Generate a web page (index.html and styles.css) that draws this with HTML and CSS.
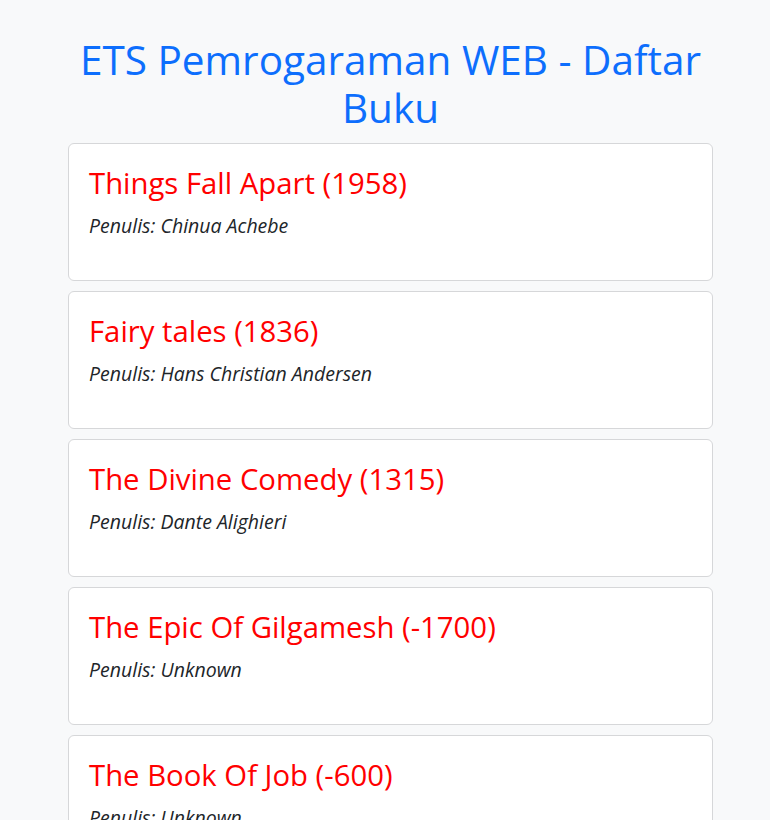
FILE: index.html
```html
<!DOCTYPE html>
<html lang="id">
<head>
<meta charset="utf-8">
<title>ETS Pemrogaraman WEB - Daftar Buku</title>
<link rel="stylesheet" href="styles.css">
</head>
<body>
<main class="container">
  <h1 class="page-title">ETS Pemrogaraman WEB - Daftar Buku</h1>
  <div class="book-list">
    <div class="book-card">
      <h2 class="book-title">Things Fall Apart (1958)</h2>
      <p class="book-author">Penulis: Chinua Achebe</p>
    </div>
    <div class="book-card">
      <h2 class="book-title">Fairy tales (1836)</h2>
      <p class="book-author">Penulis: Hans Christian Andersen</p>
    </div>
    <div class="book-card">
      <h2 class="book-title">The Divine Comedy (1315)</h2>
      <p class="book-author">Penulis: Dante Alighieri</p>
    </div>
    <div class="book-card">
      <h2 class="book-title">The Epic Of Gilgamesh (-1700)</h2>
      <p class="book-author">Penulis: Unknown</p>
    </div>
    <div class="book-card">
      <h2 class="book-title">The Book Of Job (-600)</h2>
      <p class="book-author">Penulis: Unknown</p>
    </div>
  </div>
</main>
</body>
</html>
```
FILE: styles.css
```css
html, body {
  margin: 0;
  padding: 0;
}
body {
  background: #f8f9fa;
  font-family: "Open Sans", "Noto Sans", sans-serif;
  color: #212529;
  padding-left: 11px;
}
.container {
  width: 645px;
  margin: 0 auto;
}
.page-title {
  margin: 36px 0 11px;
  font-size: 40.5px;
  line-height: 48px;
  font-weight: 500;
  color: #0d6efd;
  text-align: center;
}
.book-list {
  display: flex;
  flex-direction: column;
  gap: 10px;
}
.book-card {
  background: #fff;
  border: 1px solid #d6d7d9;
  border-radius: 6px;
  padding: 22px 20px 40px;
  height: 138px;
  box-sizing: border-box;
}
.book-title {
  margin: 0 0 11px;
  font-size: 29.3px;
  line-height: 35px;
  font-weight: 400;
  color: #ff0000;
}
.book-author {
  margin: 0;
  font-size: 19.5px;
  line-height: 27px;
  font-style: italic;
}
```
